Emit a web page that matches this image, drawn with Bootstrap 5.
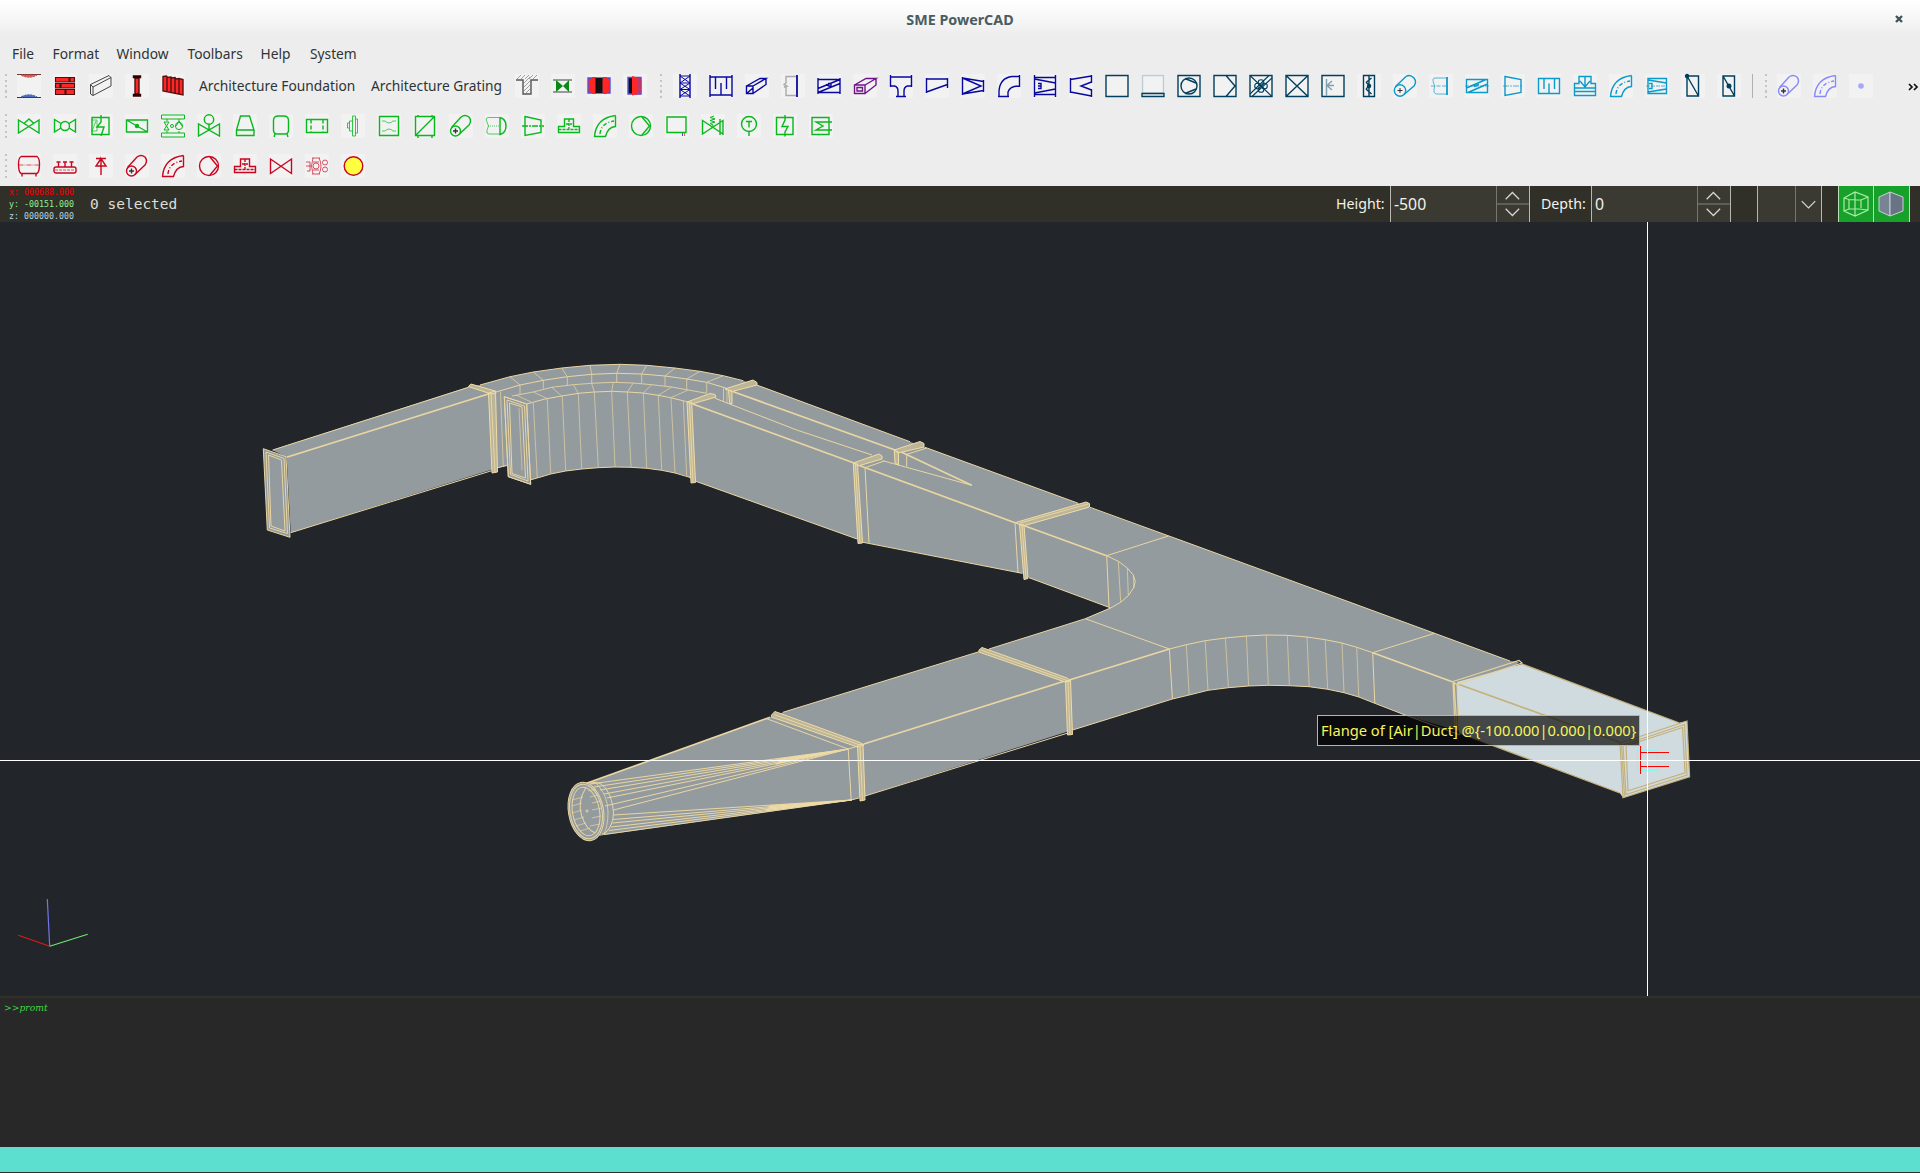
<!DOCTYPE html>
<html lang="en">
<head>
<meta charset="utf-8">
<title>SME PowerCAD</title>
<link rel="stylesheet" href="https://cdn.jsdelivr.net/npm/bootstrap@5.3.0/dist/css/bootstrap.min.css">
<style>
body{width:1920px;height:1173px;overflow:hidden;background:#ededed;font-family:"Noto Sans","Open Sans",sans-serif;font-size:13.75px;line-height:20px;color:#2e3436}
.titlebar{height:40px;background:linear-gradient(#fff,#f7f7f7 45%,#ededed 88%);color:#4a5c62;font-weight:700;font-size:14.3px}
.titlebar .closer{width:8px;height:8px;right:17px;top:15px}
.menubar{height:26px;padding:1px 0 0 12px}
.menubar a{color:inherit;text-decoration:none}
.w41{width:40.5px}.w64{width:64px}.w71{width:71px}.w73{width:73px}.w49{width:49.5px}
.toolrow{height:40px}
.grip{width:11px;height:24px;padding-left:5px;flex:none}
.grip.mid{width:14px;padding-left:7px}
.grip.late{width:13.5px}
.grip i{display:block;width:2px;height:24px;background:repeating-linear-gradient(#c4c4c4 0 2px,transparent 2px 5.5px)}
.ic{width:24px;height:24px;margin:0 6px;flex:none;background:#f2f2f2;fill:none;stroke:currentColor;stroke-width:1.4;overflow:visible}
.tlabel{padding-left:8px;flex:none;white-space:nowrap}
.found{width:172px}.grat{width:146px}
.vr-line{width:1px;height:24px;background:#b0b0b0;margin:0 5px 0 4.5px;flex:none}
.more{width:12px;height:12px;margin:1px 1px 0 auto}
.navy{color:#0808a0}.deep{color:#003f5e}.cyan{color:#0a9acb}.lilac{color:#8888fb}.grn{color:#08b81c}.crim{color:#c8061f}
.gray4{color:#444}.gray7{color:#777}.grayA{color:#aaa}.plum{color:#701488}
.t{stroke-width:.9;opacity:.75}
.b{stroke-width:1.8}
.propbar{height:36px;background:#302f28;color:#f2f2ea;font-size:14.2px}
.coords{width:81px;padding-left:9px;font:8.3px/12px "DejaVu Sans Mono",monospace}
.coords div{white-space:pre}
.cx{color:#f00000}.cy{color:#90ee90}.cz{color:#add8e6}
.selinfo{padding-left:9px;font:14.5px/36px "DejaVu Sans Mono","Liberation Mono",monospace;color:#dededa;width:1255px}
.lblh{width:54px}.lbld{width:61px;padding-left:11px}
.fld{background:#3a3932;border:solid #b8b8b2;border-width:0 1px;height:36px}
.numfld{width:140px}
.val{width:106px;padding-left:3px;font-size:15.8px}
.spin{width:33px;height:36px;border-left:1px solid #77776f;fill:none;stroke:#d6d6d0;stroke-width:1.3}
.combo{width:65px;margin-left:26px}
.combo .spin{width:26px}
.gbtn{width:36px;height:36px;background:#17a02a;border-right:1px solid #b6e0b6}
.gbtn.first{margin-left:16px;width:36px;border-left:1px solid #b6e0b6}
.gbtn svg{width:35px;height:36px;display:block}
.view3d{height:774px;background:#22252a}
.view3d svg{display:block}
.edge{fill:none;stroke:#e9d6a3;stroke-width:1}
.thick{stroke-width:1.7}
.flg{fill:#bdb598;stroke:#f0dca6;stroke-width:1}
.face{fill:#949b9e}
.tip{left:1317px;top:493px;width:323px;height:31px;border:1px solid #b5b5b5;background:rgba(0,0,0,.68);color:#f6f65a;font-size:14.7px;line-height:29px;padding-left:3px;white-space:nowrap}
.chv{left:0;top:538px;width:1920px;height:1px;background:#fff}
.cvv{left:1647px;top:0;width:1px;height:774px;background:#fff}
.console{height:151px;border-top:2px solid #302f28;background:#282828;color:#3ddb45;padding:3px 0 0 4px;font:italic 9.2px/14px "DejaVu Serif",serif}
.foot{height:25px;background:#5ddfcf}
.base{height:1px;background:#302f28}
</style>
</head>
<body>
<div class="titlebar position-relative d-flex align-items-center justify-content-center"><span>SME PowerCAD</span>
<svg class="closer position-absolute" viewBox="0 0 8 8"><path d="M1 1L7 7M7 1L1 7" stroke="#41545c" stroke-width="2.4"/></svg></div>
<nav class="menubar d-flex align-items-center"><a class="w41">File</a><a class="w64">Format</a><a class="w71">Window</a><a class="w73">Toolbars</a><a class="w49">Help</a><a>System</a></nav>

<div class="toolrow d-flex align-items-center">
<div class="grip"><i></i></div>
<svg class="ic" viewBox="0 0 24 24"><path d="M0 .5H24" stroke="#733" stroke-width="1"/><path d="M4 1H20Q12 5.500 4 1" fill="#d66" stroke="#b44" stroke-width="1" stroke-dasharray="2 1"/><path d="M0 23.5H24" stroke="#335" stroke-width="1"/><path d="M4 23H20Q12 18.500 4 23" fill="#57c" stroke="#35a" stroke-width="1" stroke-dasharray="2 1"/></svg>
<svg class="ic" viewBox="0 0 24 24"><g fill="#ff2626" stroke="#4a1010" stroke-width="1.1"><path d="M2.500 3.500H16V8H2.500zM17 3.500H21.500V8H17zM2.500 9.500H7V14H2.500zM8 9.500H21.500V14H8zM2.500 15.500H12V20.500H2.500zM13 15.500H21.500V20.500H13z"/></g></svg>
<svg class="ic gray4" viewBox="0 0 24 24"><path stroke-width="1" d="M1.500 10.500L20 1.500L22 3.500V12L4 21.500L1.500 20zM4 13L22 3.500M4 13V21.500M1.500 10.500L4 13"/></svg>
<svg class="ic" viewBox="0 0 24 24"><path fill="#ff2626" stroke="#4a1010" d="M10 4H14V20H10z"/><path fill="#4a1010" stroke="#300" d="M8.500 2H15.500V3.500H8.500zM8.500 20.500H15.500V22H8.500z"/></svg>
<svg class="ic" viewBox="0 0 24 24"><path fill="#ff2626" stroke="#5a1010" d="M2 2.500L5.500 2L6.500 3.500L10 3L11 4L14 3.500L15 5L18 4.500L22 5.500V21L2 17zM6 3V18M10 3V19M14 4V20M18 5V21"/></svg>
<div class="tlabel found">Architecture Foundation</div><div class="tlabel grat">Architecture Grating</div>
<svg class="ic gray7" viewBox="0 0 24 24"><path d="M1 6H8V20H16V6H23" stroke="#555" stroke-width="1.4"/><path class="t" d="M2 5L6 1M6 5L10 1M10 5L14 1M14 5L18 1M18 5L22 1M8 10L15 3M8 14L16 6M8 18L16 10M10 20L16 14"/></svg>
<svg class="ic" viewBox="0 0 24 24"><path d="M2 6H21M2 18H21" stroke="#999" stroke-width="2"/><path d="M5 6V18L12 12zM18 6V18L12 12z" fill="#0a8a12" stroke="none"/></svg>
<svg class="ic" viewBox="0 0 24 24"><path d="M1 4H23V19H1z" fill="#ff2626" stroke="#5050e0"/><path d="M5 3H9V20H5zM16 3H20V20H16z" fill="#ff2626" stroke="none"/><path d="M8.500 4H15.500V19H8.500z" fill="#111" stroke="none"/></svg>
<svg class="ic" viewBox="0 0 24 24"><path d="M5 3.500H18V20H5z" fill="#111" stroke="#5050e0"/><path d="M9 2L16 4V20L9 21.500z" fill="#ff2626" stroke="none"/><path d="M16 4H18V20H16z" fill="#f22" stroke="#55e" stroke-width=".8"/></svg>
<div class="grip mid"><i></i></div>
<!-- air ducts, rectangular -->
<svg class="ic navy" viewBox="0 0 24 24"><path d="M7 0V24M17 0V24"/><path stroke-width="1" d="M7 2H17M7 9H17M7 15.500H17M7 22H17M7 2L17 9M17 2L7 9M7 9L17 15.500M17 9L7 15.500M7 15.500L17 22M17 15.500L7 22"/></svg>
<svg class="ic navy" viewBox="0 0 24 24"><path d="M1 1V23M23 1V23M1 3H23M1 21H23M6.500 3V15M17.500 3V15M12 9V21"/></svg>
<svg class="ic navy" viewBox="0 0 24 24"><path d="M1.500 12H8V19.500H1.500zM1.500 12L15 4.500H21L8 12M21 4.500V10.500L8 19.500M1.500 19.500L8 14"/></svg>
<svg class="ic grayA" viewBox="0 0 24 24"><path d="M15 2.500H5V9L3 10.500L6 12L3 13H5V21.500H15"/><path stroke="#0808a0" class="b" d="M16 1V23"/></svg>
<svg class="ic navy" viewBox="0 0 24 24"><path d="M1 4V20M23 4V20M1 5.500H23M1 18.500H23M1 14.500L23 5.500M1 18.500L23 9.500M9 10.500L14 13M11 9.500H14V13"/></svg>
<svg class="ic plum" viewBox="0 0 24 24"><path d="M1.500 11H12V19.500H1.500zM4 13.500H9.500V17H4zM1.500 11L13 4.500H23L12 11M23 4.500V11L12 19.500"/></svg>
<svg class="ic navy" viewBox="0 0 24 24"><path d="M1.500 1V13M22.500 1V13M1.500 3H22.500M1.500 12H5.500Q9 13 9 17V22.500M22.500 12H18.500Q15 13 15 17V22.500M7 22.500H17"/></svg>
<svg class="ic navy" viewBox="0 0 24 24"><path d="M1.500 4V19M22.500 4V14M1.500 5H22.500M1.500 18L22.500 10.500"/></svg>
<svg class="ic navy" viewBox="0 0 24 24"><path d="M1.500 3V21M22.500 6V18M1.500 4L22.500 7.500M1.500 20L22.500 16.500M1.500 4L20 12L1.500 20"/></svg>
<svg class="ic navy" viewBox="0 0 24 24"><path d="M22.500 1V13M1 22.500H12M2 22.500V17Q3 4 15 2.500H22.500M11 22.500V18Q13 12 22.500 12"/></svg>
<svg class="ic navy" viewBox="0 0 24 24"><path d="M1.500 1V23M22.500 1V23M1.500 3.500H22.500M1.500 20.500H22.500M1.500 5L22.500 9M1.500 19L22.500 15M5 9.500H8V14.500H5M5 12H8"/></svg>
<svg class="ic navy" viewBox="0 0 24 24"><path d="M1.500 4V19M22.500 1V9M22.500 15V23M1.500 5.500L22.500 2M1.500 18L22.500 22M22.500 8L12 12L22.500 16"/></svg>
<svg class="ic deep" viewBox="0 0 24 24"><path d="M1 1.500H23V22.500H1z"/></svg>
<svg class="ic deep" viewBox="0 0 24 24"><path stroke="#becdd5" d="M1.500 1.500H22.500V19H1.500z"/><path d="M1 19.500H23V22.500H1z"/></svg>
<svg class="ic deep" viewBox="0 0 24 24"><path d="M1 1.500H23V22.500H1zM8 4.500L19 9M8 19.500L19 15"/><circle cx="12" cy="12" r="8"/></svg>
<svg class="ic deep" viewBox="0 0 24 24"><path d="M1 1.500H23V22.500H1zM13 1.500L22 12L13 22.500"/></svg>
<svg class="ic deep" viewBox="0 0 24 24"><path d="M1 1.500H23V22.500H1z"/><g stroke-width="1.100"><path d="M1 1.500L23 22.500M1 20L20 1.500M3 22.500L23 4"/><circle cx="12" cy="8.500" r="2.800"/><circle cx="12" cy="15.500" r="2.800"/><circle cx="8.500" cy="12" r="2.800"/><circle cx="15.500" cy="12" r="2.800"/></g></svg>
<svg class="ic deep" viewBox="0 0 24 24"><path d="M1 1.500H23V22.500H1zM1 1.500L23 22.500M23 1.500L1 22.500"/></svg>
<svg class="ic deep" viewBox="0 0 24 24"><path d="M1 1.500H23V22.500H1z"/><path stroke="#7fa0ae" d="M5.500 5V22M7 11.500H13M11 7L6 11.500L11 16"/></svg>
<svg class="ic deep" viewBox="0 0 24 24"><path d="M6.500 1.500H17.500V22.500H6.500zM12 1.500V22.500M14.500 4L9 8.500M9 8.500L14 12M9 15L14.500 20M12 12L9 15"/><circle cx="12" cy="12" r="1.500" fill="currentColor"/></svg>
<!-- air ducts, round -->
<svg class="ic cyan" viewBox="0 0 24 24"><circle cx="7" cy="16.500" r="5.700"/><path d="M2.500 12.500L13 2.500Q17 0 21 4Q24 8 21 12L11 20.500"/><path stroke="#333" stroke-width="1" d="M4.500 16.500H9.500M7 14V19"/></svg>
<svg class="ic cyan" viewBox="0 0 24 24"><path class="t" d="M18 4H5Q3 5 4.500 9Q7 12 5 15Q4 19 7 20H18"/><path class="t" stroke-dasharray="4 1.500" d="M2 12H17"/><path class="b" d="M18 3V21"/></svg>
<svg class="ic cyan" viewBox="0 0 24 24"><path d="M1.500 5.500H22.500V18.500H1.500zM1.500 14L21 5.500M3 18.500L22.500 10M9 12.500L14 10.500"/><path class="t" stroke-dasharray="4 1" d="M0 12H24"/></svg>
<svg class="ic cyan" viewBox="0 0 24 24"><path d="M4 2.500L20 5.500V18.500L4 21.500z"/><path class="t" stroke-dasharray="6 1 2 1" d="M2 12H22"/></svg>
<svg class="ic cyan" viewBox="0 0 24 24"><path d="M1.500 4.500H22.500V19.500H1.500zM7 4.500V15M17.500 4.500V15M12 9.500V19.500"/></svg>
<svg class="ic cyan" viewBox="0 0 24 24"><path d="M1.500 9.500H6V2.500H18V9.500H22.500V21.500H1.500zM1.500 14H22.500M1.500 17.500H22.500M12 3V13M7 7L12 13L17 7"/></svg>
<svg class="ic cyan" viewBox="0 0 24 24"><path d="M22.500 1.500V12.500Q15 13 12.500 22.500H1.500Q3 4 22.500 1.500"/><path stroke-dasharray="4 2 1 2" d="M7 20Q8 9 21 7"/></svg>
<svg class="ic cyan" viewBox="0 0 24 24"><path d="M3 4.500H21.500V19.500H3zM3 6L21.500 9M3 18L21.500 15M4 9.500H7V14.500H4"/><path class="t" stroke-dasharray="4 1" d="M1 12H20"/></svg>
<svg class="ic deep" viewBox="0 0 24 24"><path d="M6 2H17.500V22H6zM6 2L17.500 22"/><circle cx="6" cy="2" r="1.500" fill="currentColor"/></svg>
<svg class="ic deep" viewBox="0 0 24 24"><path d="M6 2H17.500V22H6zM6 2L17.500 22"/><circle cx="12" cy="12" r="1.800" fill="currentColor"/></svg>
<div class="vr-line"></div><div class="grip mid late"><i></i></div>
<svg class="ic lilac" viewBox="0 0 24 24"><circle cx="6.500" cy="17" r="5"/><path d="M2.500 13.500L12 3Q16 0 20 3Q23 7 20 11L10 20.500"/><path stroke="#333" d="M4 17H9M6.500 14.500V19.500"/></svg>
<svg class="ic lilac" viewBox="0 0 24 24"><path d="M22.500 1.500V12.500Q15 13 12.500 22.500H1.500Q3 4 22.500 1.500"/><path stroke-dasharray="4 2 1 2" d="M7 20Q8 9 21 7"/></svg>
<svg class="ic lilac" viewBox="0 0 24 24"><circle cx="12" cy="12" r="2.800" fill="#a6a6fa" stroke="none"/></svg>
<svg viewBox="0 0 12 12" class="more"><path d="M2 3L5 6L2 9M7 3L10 6L7 9" fill="none" stroke="#111" stroke-width="1.700"/></svg>
</div>

<div class="toolrow d-flex align-items-center grn">
<div class="grip"><i></i></div>
<svg class="ic" viewBox="0 0 24 24"><path d="M1.500 6V19L22 6V19zM7 9.500L12 5L17 9.500"/></svg>
<svg class="ic" viewBox="0 0 24 24"><path d="M8 9.500L1.500 5.500V18L8 14M16 9.500L22.500 5.500V18L16 14"/><circle cx="12" cy="12" r="4.500"/></svg>
<svg class="ic" viewBox="0 0 24 24"><path d="M3 3.500H20V20.500H3zM12 1V8L8 13H15L12 22"/><path class="t" d="M2 6H8V17H2M3 17L7 7"/></svg>
<svg class="ic" viewBox="0 0 24 24"><path d="M1.500 6H22.500V18H1.500zM1.500 6L22.500 18"/><circle cx="12" cy="12" r="1.500" fill="currentColor"/></svg>
<svg class="ic" viewBox="0 0 24 24"><path stroke-width="1" d="M.5 1H23.500V5H.5zM.5 19H23.500V23H.5zM6 5V7M6 19V17M18 5V7M18 17V19M3 8H8L3 16H8zM15 12L18 7L21 12"/><circle cx="11" cy="12" r="1.500" stroke-width="1"/><circle cx="18" cy="12" r="3.600" stroke-width="1"/></svg>
<svg class="ic" viewBox="0 0 24 24"><path d="M1.500 10V22L22.500 10V22zM12 10V16"/><circle cx="12" cy="5.500" r="4.700"/></svg>
<svg class="ic" viewBox="0 0 24 24"><path d="M7.500 2H16.500L21 16V21.500H3.500V16zM3.500 16H21"/></svg>
<svg class="ic" viewBox="0 0 24 24"><path d="M4.500 6Q5 2 9 2H15Q19 2 19.500 6V17Q19 20 16 20H8Q5 20 4.500 17zM6 20L5 23M18 20L19 23"/></svg>
<svg class="ic" viewBox="0 0 24 24"><path d="M1.500 5.500H22.500V18.500H1.500z"/><path stroke-dasharray="4 2" d="M6 5.500V18.500M18 5.500V18.500"/></svg>
<svg class="ic" viewBox="0 0 24 24"><path stroke-width="1" opacity=".8" d="M11.500 2H14.500V22H11.500zM14.500 5H16.500V19H14.500M11.500 7H8.500V17H11.500M8.500 9H6.500V14H8.500"/></svg>
<svg class="ic" viewBox="0 0 24 24"><path d="M2.500 2.500H21.500V21.500H2.500z"/><path class="t" d="M5 7H8Q12 11 16 7H19M5 17H8Q12 13 16 17H19"/></svg>
<svg class="ic" viewBox="0 0 24 24"><path d="M2.500 2.500H21.500V21.500H2.500zM2.500 21.500L21.500 2.500M5 1V2M19 1V2M5 22V24M19 22V24"/></svg>
<svg class="ic" viewBox="0 0 24 24"><circle cx="6.500" cy="17" r="5"/><path d="M2.500 13.500L12 3Q16 0 20 3Q23 7 20 11L10 20.500"/><path stroke="#333" d="M4 17H9M6.500 14.500V19.500"/></svg>
<svg class="ic" viewBox="0 0 24 24"><path class="t" d="M15 3.500H3Q0 4 2 8Q5 12 2 16Q1 20 4 20H15"/><path class="t" stroke-dasharray="1 1" d="M3 12H15"/><path d="M15 3.500V20.500Q21 19 21 12Q21 5 15 3.500"/></svg>
<svg class="ic" viewBox="0 0 24 24"><path d="M4 2.500L20 6V18.500L4 21.500z"/><path stroke-dasharray="6 1 2 1" d="M1 12H23"/></svg>
<svg class="ic" viewBox="0 0 24 24"><path d="M1.500 12.500H7.500V5H16.500V12.500H22.500V18.500H1.500z"/><path stroke-dasharray="3 1" d="M1.500 15.500H22.500M12 5V15M9 10H15"/></svg>
<svg class="ic" viewBox="0 0 24 24"><path d="M22.500 1.500V12.500Q15 13 12.500 22.500H1.500Q3 4 22.500 1.500"/><path stroke-dasharray="4 2 1 2" d="M7 20Q8 9 21 7"/></svg>
<svg class="ic" viewBox="0 0 24 24"><circle cx="12" cy="12" r="9.500"/><path d="M13 3L20.500 12L13 21"/></svg>
<svg class="ic" viewBox="0 0 24 24"><path d="M2 3H21V18.500H2z"/><path stroke="#44f" stroke-width="1" d="M17.500 19V22"/><path stroke="#f55" stroke-width="1" d="M19.500 19V22"/></svg>
<svg class="ic" viewBox="0 0 24 24"><path d="M1.500 6.500V20L22 6.500V20zM19 5V21M22 6V21"/><path stroke-width="1" d="M12 13V11L9 9.500L14 8L9 6.500L14 5L9 3.500L13 2"/></svg>
<svg class="ic" viewBox="0 0 24 24"><circle cx="12" cy="10" r="7.500"/><path d="M12 17.500V22M9 7.500H15M12 7.500V13.500"/></svg>
<svg class="ic" viewBox="0 0 24 24"><path d="M3.500 3.500H20V20.500H3.500zM12 1V6L9 12.500H15L12 18V22.500"/></svg>
<svg class="ic" viewBox="0 0 24 24"><path d="M3 3.500H20V20.500H3zM23 8H7L14 12L7 16H23"/></svg>
</div>

<div class="toolrow d-flex align-items-center crim">
<div class="grip"><i></i></div>
<svg class="ic" viewBox="0 0 24 24"><path d="M4 2.500H20Q22.500 4 22.500 10Q22.500 18 20 19.500H4Q1.500 18 1.500 10Q1.500 4 4 2.500M5 20V22.500M19 20V22.500"/><path class="t" stroke-dasharray="5 1 1 1" d="M1.500 11H22.500"/></svg>
<svg class="ic" viewBox="0 0 24 24"><rect x="1" y="13" width="22" height="6" rx="2"/><path d="M5.500 8V13M12 8V13M18.500 8V13M3.500 8H7.500M10 8H14M16.500 8H20.500"/><path class="t" stroke-dasharray="3 1" d="M2 16H22"/></svg>
<svg class="ic" viewBox="0 0 24 24"><path d="M7 4.500H17M12 4.500L7 12H17L12 4.500V21"/></svg>
<svg class="ic" viewBox="0 0 24 24"><circle cx="6.500" cy="17" r="5"/><path d="M2.500 13.500L12 3Q16 0 20 3Q23 7 20 11L10 20.500"/><path stroke="#333" d="M4 17H9M6.500 14.500V19.500"/></svg>
<svg class="ic" viewBox="0 0 24 24"><path d="M22.500 1.500V12.500Q15 13 12.500 22.500H1.500Q3 4 22.500 1.500"/><path stroke-dasharray="4 2 1 2" d="M7 20Q8 9 21 7"/></svg>
<svg class="ic" viewBox="0 0 24 24"><circle cx="12" cy="12" r="9.500"/><path d="M13 3L20.500 12L13 21"/></svg>
<svg class="ic" viewBox="0 0 24 24"><path d="M1.500 12.500H7.500V5H16.500V12.500H22.500V18.500H1.500z"/><path stroke-dasharray="3 1" d="M1.500 15.500H22.500M12 5V15M9 10H15"/></svg>
<svg class="ic" viewBox="0 0 24 24"><path d="M1.500 5V19.500L22.500 5V19.500z"/></svg>
<svg class="ic" viewBox="0 0 24 24"><path class="t" d="M1 8H5V17H2M1 12H6M7 4H15M7 20H15M8 4Q5 12 8 20M14 4Q18 12 14 20M8 8H14M8 16H14"/><circle class="t" cx="20" cy="8.500" r="2.500"/><circle class="t" cx="20" cy="15.500" r="2.500"/><circle class="t" cx="11" cy="12" r="3"/></svg>
<svg class="ic" viewBox="0 0 24 24"><circle cx="12.500" cy="12" r="9.300" fill="#ffff40"/></svg>
</div>

<div class="propbar d-flex align-items-center">
<div class="coords"><div class="cx">x: 000688.000</div><div class="cy">y: -00151.000</div><div class="cz">z: 000000.000</div></div>
<div class="selinfo">0 selected</div>
<div class="lblh">Height:</div>
<div class="fld numfld d-flex align-items-center"><div class="val">-500</div><svg class="spin" viewBox="0 0 33 36"><path d="M9 13L16 6L23 13M9 23L16 30L23 23"/><path d="M0 18H33" stroke="#77776f"/></svg></div>
<div class="lbld">Depth:</div>
<div class="fld numfld d-flex align-items-center"><div class="val">0</div><svg class="spin" viewBox="0 0 33 36"><path d="M9 13L16 6L23 13M9 23L16 30L23 23"/><path d="M0 18H33" stroke="#77776f"/></svg></div>
<div class="fld combo d-flex justify-content-end"><svg class="spin" viewBox="0 0 26 36"><path d="M6 15L13 22L20 15"/></svg></div>
<div class="gbtn first"><svg viewBox="0 0 35 36" fill="none" stroke="#a8eca8" stroke-width="1.200"><path d="M5 12L16 6L29 11V24L16 30L5 25zM16 6V30M5 12L10 13.500L22 14L29 11M5 25L10 23H20L29 24M10 13.500V23M22 14V22"/></svg></div>
<div class="gbtn"><svg viewBox="0 0 35 36"><path d="M5 11L16 6V30L5 25z" fill="#788494" stroke="#c8d0d6"/><path d="M16 6L29 11V25L16 30z" fill="#687484" stroke="#c8d0d6"/></svg></div>
</div>

<main class="view3d position-relative overflow-hidden">
<svg width="1920" height="774" viewBox="0 222 1920 774">
<!-- duct bodies -->
<g class="face">
<path d="M272 450L468 387L480 385L510 376.700L533 372L562 368L590 365.300L620 364.300L647 365.300L675 368L700 371.300L723 375.700L743 380.700L757 385L910 441.700L1078 503.300L1180 540L1289.400 580L1434.600 633.300L1510 661L1519 662L1455 730L1405 715L1374.800 703.300L1358.800 697L1344 692.700L1327.700 689.300L1309 686.700L1289 685.700L1268 685.300L1248.600 686L1228 687.700L1208 690.300L1189 695L1172.400 699L1072.600 730L865 796L852 800L604 835L590 838L572 800L586.500 783.300L770 717.300L783 712.300L979 651.700L989 649L1060 626.700L1085 618.700L1110 607.700L1029 577.700L1021.700 573.300L863 542.300L857 539L695 481L686.700 476L675 473L661.700 470.300L646.700 468.300L631 467.300L615 467L598 467.700L581.700 469L565.700 471L550.700 474L537 478L530 480L508 466L497 468L290.700 532.700L286.700 457z"/>
<path d="M263.300 448.700L286 456.700L290 537.300L267.300 530z"/>
<ellipse cx="586" cy="811.500" rx="17.500" ry="29.500" transform="rotate(-10 586 811.500)"/>
</g>
<path d="M1457 682L1522 664L1679 722.700L1687 721L1689.600 776.700L1623 797.700L1619.800 793L1459 733z" fill="#d0dbe0"/>
<!-- left duct -->
<g class="edge">
<path d="M263.300 448.700L286 456.700L290 537.300L267.300 530zM266 452L284 458.500L287.500 533.500L269.500 528zM268.500 455L281.500 460L285 531L271 526z"/>
<path d="M272.700 450L468.500 387.300M290.700 532.700L491.700 470.700M497 468L506.500 465.300"/>
<path class="thick" d="M286.700 457.300L488.300 394"/>
<path class="flg" d="M468.300 386.500L471 384L495 391L496 393L491 394zM488.500 393L495.500 391L497.500 472L492 473z"/>
<path d="M491 393L495 472"/><path opacity=".7" d="M500.500 391.700L503.300 466.500"/>
</g>
<!-- back elbow -->
<g class="edge">
<path d="M480 385L510 376.700L533.300 372L561.700 368L590 365.300L620 364.300L646.700 365.300L675 368L700 371.300L723.300 375.700L743.300 380.700"/>
<path d="M495 392.300L520 385L543.300 380.300L567.300 376.700L591.700 374.300L616.700 373.300L641.700 374L665 376L686.700 379L706.700 382.300L726.700 388.300"/>
<path opacity=".75" d="M510 376.700L520 385V394M533.300 372L543.300 380.300V388.500M561.700 368L567.300 376.700V385M590 365.300L591.700 374.300V383M620 364.300L616.700 373.300V382M646.700 365.300L641.700 374V383M675 368L665 376V386M700 371.300L686.700 379V389M723.300 375.700L706.700 382.300V393M723.500 388V401M727 389V403"/>
</g>
<!-- front elbow -->
<g class="edge">
<path opacity=".85" d="M512 396L533.300 392L551.700 387.300L573.300 384.700L591.700 383.300L613.300 382.300L633.300 383L651.700 384.700L671.700 387L688.300 390L706.700 393.300"/>
<path d="M526.700 404L545 399L561.700 396L578.300 393.300L594.300 392L611.700 391.300L627.300 392L643.300 393L658.300 395.300L670.700 397.700L686.700 401.700"/>
<path d="M530 480L537.300 478L550.700 474L565.700 471L581.700 469L598.300 467.700L615 467L631 467.300L646.700 468.300L661.700 470.300L675 473L692 478"/>
<path d="M516 395L531 402M533.300 392L547 398.500M551.700 387.300L561.700 396M573.300 384.700L578.300 393.300M591.700 383.300L594.300 392M613.300 382.300L611.700 391.300M633.300 383L627.300 392M651.700 384.700L643.300 393M671.700 387L658.300 395.300M688.300 390L670.700 397.700" opacity=".7"/>
<path opacity=".65" d="M533.300 403L537.300 478M547.300 399L550.700 474M562.300 396L565.700 471M578.300 393.300L581.700 469M594.300 392L598.300 467.700M611.700 391.300L615 467M627.300 392L631 467.300M643.300 393L646.700 468.300M658.300 395.300L661.700 470.300M671 398L675 473M683.300 401L686.700 476"/>
<path class="face" d="M504.300 396.700L526.700 404L530.700 484.300L508.300 476.700z"/>
<path d="M507 400L524.500 406L528 481L510.500 474.500zM509.500 403L522 407L525.500 478L512 473.500z"/><path opacity=".6" d="M519 408L522 470"/>
<path class="flg" d="M687 402L710 393.500L715 394.500L716 397L692 404zM687 402L691.700 402L695.500 482.500L691 483z"/>
<path d="M689.500 404L693 482"/>
<path class="flg" d="M725 389L753 380L757 382.500L757 385L732 391.500zM728.500 390L732 391V404L729.500 403z"/>
</g>
<!-- twin branches -->
<g class="edge">
<path d="M756.700 385L910 441.700M925 447.300L1078.300 503.300M1090 507.300L1180 540L1289.400 580L1434.600 633.300L1510 661"/>
<path class="thick" d="M733.300 391.700L895 450M692.700 404L853.300 462.700M860 465.700L1015 522.700M900.700 451.700L971.700 485.300M1025 526L1106.700 555.700"/>
<path d="M715 398.300L796.700 430L872 455M882.700 460.700L971.700 485.300M695 481L857 539M863 542.300L1022 573.300M1029 577.700L1110 607.700M865 467.700L884.300 461M865 467.700L869 542.700M906.700 454.300L926 448.300M906.700 454.300V466.500"/>
<path class="flg" d="M853.300 463L879 454L882 456L882 459L858 466zM853.300 463L857.500 464L862.500 543L858 543.500z"/>
<path d="M855.500 465L860 543"/>
<path class="flg" d="M894.300 450L920 441.500L924 443.500V447L898 453zM894.300 450L898.500 452V465L895 463z"/>
<path class="flg" d="M1015 522.700L1086 502L1089.500 503.500V507L1023 526zM1019.500 524L1024 525L1028 578.500L1024 579.500z"/>
<path d="M1020 523L1088 504M1015 522.700L1018 573M1022 526L1026 579"/>
<path d="M1106.700 555.700L1168.300 536M1106.700 555.700L1109 606.700"/>
<path d="M1106.700 555.700L1118.300 561.300L1127.300 568L1133.300 575L1135.300 581.700L1133.300 588.300L1128.300 595.700L1120.700 602.300L1110 608.300L1085.300 618.700L1060 626.700L989 649"/>
<path opacity=".7" d="M1118.300 561.300L1120.700 602.300M1127.300 568L1128.300 595.700M1133.300 576L1134 588.300"/>
</g>
<!-- Y piece and lower branch -->
<g class="edge">
<path d="M1085.300 618.700L1169.400 649L1172.400 699M1072.600 730L1172.400 699M1372.700 652.700L1434.600 633.300"/>
<path class="thick" d="M1069.300 680L1169.400 649M1372.700 652.700L1452.300 681.700M863.700 744L1065 681"/>
<path d="M1169.400 649L1186.300 644.700L1205.200 640.700L1225.400 638L1246.400 636L1266.200 635L1287.300 635.300L1307 637L1325.200 639.700L1342 643L1356.700 647.300L1372.700 652.700L1374.800 703.300L1358.800 697L1344 692.700L1327.700 689.300L1309.200 686.700L1289.400 685.700L1268.300 685.300L1248.600 686L1228.400 687.700L1208 690.300L1189.200 695L1172.400 699"/>
<path opacity=".65" d="M1186.300 644.700L1189.200 695M1205.200 640.700L1208 690.300M1225.400 638L1228.400 687.700M1246.400 636L1248.600 686M1266.200 635L1268.300 685.300M1287.300 635.300L1289.400 685.700M1307 637L1309.200 686.700M1325.200 639.700L1327.700 689.300M1342 643L1344 692.700M1356.700 647.300L1358.800 697"/>
<path d="M1374.800 703.300L1405 715L1460 735M783 712.300L979 651.700M865 796L1067 733.300"/>
<path class="flg" d="M979 650L982 647.500L1067 678L1071 681L1065 682L979 652zM1065.500 681L1070.500 680L1072.500 734.500L1067.500 735z"/>
<path d="M1068 682L1070 735M981 650L1067 680.500"/>
<path class="flg" d="M771.400 715L775 711.500L860 742.500L864 745L857.500 747L771.400 717zM857.500 745L863 744L865 800L860 801z"/>
<path d="M860 746L862.500 800M774 714.500L860 745"/>
<path d="M765.600 718.300L848.200 749L851.200 800M848.200 749L858 746M851 800L859 798"/>
<path class="thick" d="M770 717.300L586.500 783.300"/>
<path d="M848.200 749L594 787M600 790L848.200 749M604 794L848.200 749M607 798L848.200 749M605 806L848.200 749M613.500 810L848.200 749"/>
<path d="M848.200 749L590 784"/>
<path d="M851.600 800L613.500 815M851.600 800L613 819.500M851.600 800L612.500 823M851.600 800L611 827M851.600 800L609 830.500M851.600 800L604 834.500"/>
</g>
<path d="M848 749L780 758.500L775 765z" fill="#f0dca6" opacity=".8"/>
<path d="M851 800L770 805L765 811.500z" fill="#f0dca6" opacity=".75"/>
<g class="edge">
<path d="M590 783Q603 779 610 796Q617 815 610 827Q606 834 602 834"/>
<path d="M596 783Q608 795 608 812Q608 826 604 834" opacity=".8"/>
<g transform="rotate(-10 586 811.500)"><ellipse cx="586" cy="811.500" rx="17.500" ry="29.500"/><ellipse cx="586" cy="811.500" rx="16" ry="27.500"/><ellipse cx="586" cy="811.500" rx="13.500" ry="24.500"/><path d="M590 788Q579 800 581 815Q583 829 591 834"/></g>
<path opacity=".7" d="M572 800L583 797M572 806L582 803M572 813L582 810M574 820L584 817M576 826L586 823M580 831L590 828M588 791L596 789M590 797L598 795M592 803L601 801M592 810L602 808M592 818L601 816M590 826L600 824"/>
<circle cx="587" cy="811" r="1"/>
</g>
<!-- highlighted duct -->
<g fill="none" stroke="#c4b078" stroke-width="1.200">
<path d="M1522 664L1679 722.700M1459 733L1619.800 793"/>
<path stroke-width="1.600" d="M1457.700 684L1619.800 742.300"/>
<path d="M1620 743L1687 721L1689.600 776.700L1623 797.700zM1623 745L1684.500 724.500L1687 775L1626 794.500zM1626 746L1682.500 727.500L1685 772.700L1628 790.700z"/>
<path d="M1621.500 744L1624.500 796"/>
<path stroke="#e6d29c" d="M1452.300 681.700L1519 660.500L1522 663L1457 684.500zM1454 682L1457 730M1457 684L1459 731M1453 683L1455 728"/>
</g>
<rect x="1637.500" y="750.500" width="20" height="20" fill="none" stroke="#8ff2ee"/>
<path d="M1640.500 746V774M1640.500 752.500H1669M1640.500 766.500H1669" fill="none" stroke="#f00"/>
<!-- front flange rim -->
<path class="edge" d="M504.300 396.700L526.700 404L530.700 484.300L508.300 476.700z"/>
<!-- axis tripod -->
<g fill="none" stroke-width="1.200"><path d="M49.700 946.300L47.300 899" stroke="#7474ea"/><path d="M49.700 946.300L18.300 935.300" stroke="#e01818"/><path d="M49.700 946.300L87.700 934.300" stroke="#70e870"/></g>
</svg>
<div class="chv position-absolute"></div><div class="cvv position-absolute"></div>
<div class="tip position-absolute">Flange of [Air|Duct] @{-100.000|0.000|0.000}</div>
</main>
<div class="console">&gt;&gt;promt</div>
<div class="foot"></div><div class="base"></div>
<script src="https://cdn.jsdelivr.net/npm/bootstrap@5.3.0/dist/js/bootstrap.bundle.min.js"></script>
</body>
</html>
